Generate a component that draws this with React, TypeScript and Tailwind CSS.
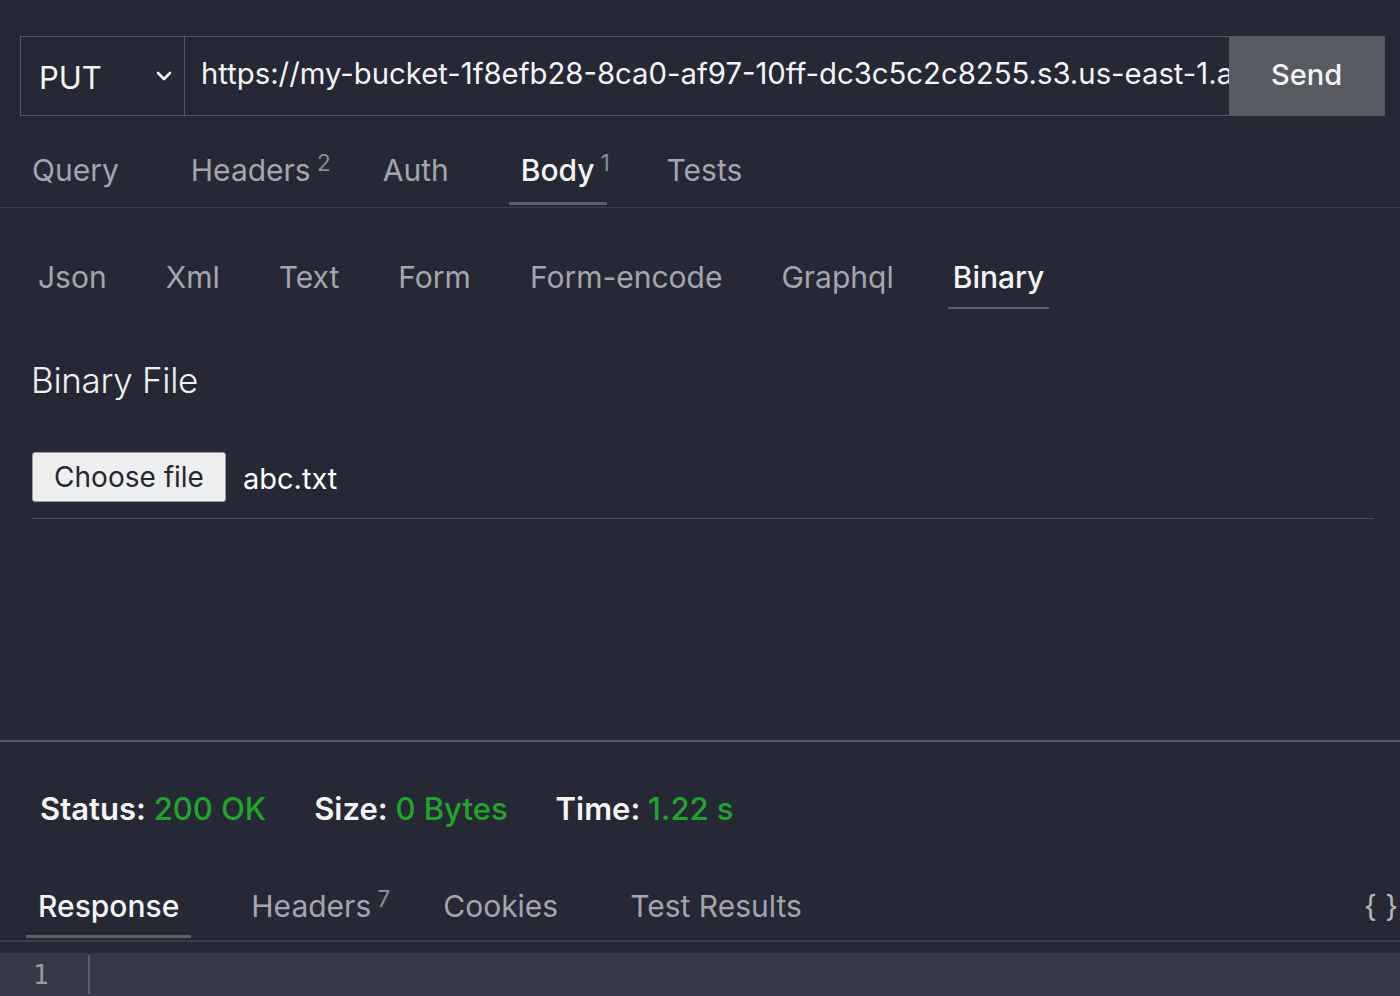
import React from "react";

function Tab({ label, sup, active, pad = "px-[12px]", under = "h-[3px]", shift = "" }: { label: string; sup?: string; active?: boolean; pad?: string; under?: string; shift?: string }) {
  return (
    <div className={`relative flex h-full items-center ${pad} ${shift}`}>
      <span className={`relative ${active ? "text-[#f4f4f6] font-medium" : "text-[#a4a5ad]"}`}>
        {label}
        {sup && (
          <span className="absolute left-full top-[-2px] ml-[6px] text-[23px] font-normal text-[#8b8c94]">{sup}</span>
        )}
      </span>
      {active && <div className={`absolute bottom-[2px] left-0 right-0 ${under} bg-[#5c5e68]`} />}
    </div>
  );
}

export default function App() {
  return (
    <div className="w-[1400px] h-[996px] overflow-hidden bg-[#262836] font-['Inter','Liberation_Sans',sans-serif] text-[#f4f4f6]">
      {/* Request bar */}
      <div className="pt-[36px] pl-[20px] pr-[15px]">
        <div className="flex h-[80px] border border-[#55575f]">
          <div className="flex w-[164px] items-center justify-between border-r border-[#55575f] pl-[18px] pr-[8px]">
            <span className="mt-[2px] text-[31px] leading-none">PUT</span>
            <svg width="24" height="24" viewBox="0 0 24 24" fill="none" stroke="#f4f4f6" strokeWidth="2.6" strokeLinecap="round" strokeLinejoin="round">
              <path d="M6 9l6 6 6-6" />
            </svg>
          </div>
          <div className="flex min-w-0 flex-1 items-center overflow-hidden whitespace-nowrap pb-[4px] pl-[16px] text-[29.3px]">
            https://my-bucket-1f8efb28-8ca0-af97-10ff-dc3c5c2c8255.s3.us-east-1.amazonaws.com/abc.txt
          </div>
          <div className="flex w-[155px] items-center justify-center bg-[#595b63] pb-[2px] text-[29px] font-medium">Send</div>
        </div>
      </div>

      {/* Main tabs */}
      <div className="flex h-[92px] items-stretch gap-[48px] border-b border-[#3e404b] pl-[20px] text-[30px]">
        <Tab label="Query" shift="pt-[18px]" />
        <Tab label="Headers" sup="2" shift="pt-[18px]" />
        <Tab label="Auth" shift="pt-[18px]" />
        <Tab label="Body" sup="1" active shift="pt-[18px]" />
        <Tab label="Tests" shift="pt-[18px]" />
      </div>

      {/* Body sub tabs */}
      <div className="flex h-[68px] mt-[35px] items-stretch gap-[49px] pl-[33px] text-[30px]">
        <Tab label="Json" pad="px-[5px]" />
        <Tab label="Xml" pad="px-[5px]" />
        <Tab label="Text" pad="px-[5px]" />
        <Tab label="Form" pad="px-[5px]" />
        <Tab label="Form-encode" pad="px-[5px]" />
        <Tab label="Graphql" pad="px-[5px]" />
        <Tab label="Binary" pad="px-[5px]" active under="h-[2px]" />
      </div>

      <div className="pl-[31px] pr-[26px]">
        <div className="mt-[52px] text-[35px] font-light leading-none tracking-[-0.3px] text-[#f0f0f2]">Binary File</div>
        <div className="mt-[54px] flex items-center gap-[17px] border-b border-[#4a4c58] pb-[16px]">
          <div className="ml-[1px] flex h-[50px] w-[194px] items-center justify-center rounded-[3px] border border-[#9a9ba0] bg-[#eeeff1] text-[28px] text-[#26282f]">
            Choose file
          </div>
          <span className="mt-[4px] text-[29px] text-white">abc.txt</span>
        </div>
      </div>

      {/* splitter */}
      <div className="mt-[221px] h-[2px] bg-[#55575f]" />

      {/* Status */}
      <div className="mt-[44px] flex items-center gap-[48px] pl-[40px] text-[31px] font-semibold">
        <span>Status: <span className="text-[#1fa62a] font-medium">200 OK</span></span>
        <span>Size: <span className="text-[#1fa62a] font-medium">0 Bytes</span></span>
        <span>Time: <span className="text-[#1fa62a] font-medium">1.22 s</span></span>
      </div>

      {/* Response tabs */}
      <div className="mt-[40px] flex h-[69px] items-stretch border-b-2 border-[#3b3d48] pl-[26px] text-[30px]">
        <div className="flex items-stretch gap-[48px]">
          <Tab label="Response" active />
          <Tab label="Headers" sup="7" />
          <Tab label="Cookies" />
          <Tab label="Test Results" />
        </div>
        <div className="ml-auto flex items-center pr-[2px] text-[30px] text-[#b5b6bc]">{"{ }"}</div>
      </div>

      {/* Editor */}
      <div className="mt-[11px] flex h-[43px] bg-[#363845]">
        <div className="flex w-[88px] items-center pl-[33px] pt-[2px] font-['DejaVu_Sans_Mono',monospace] text-[26px] text-[#9a9ba2]">1</div>
        <div className="my-[2px] w-[2px] bg-[#5c5e68]" />
      </div>
    </div>
  );
}
